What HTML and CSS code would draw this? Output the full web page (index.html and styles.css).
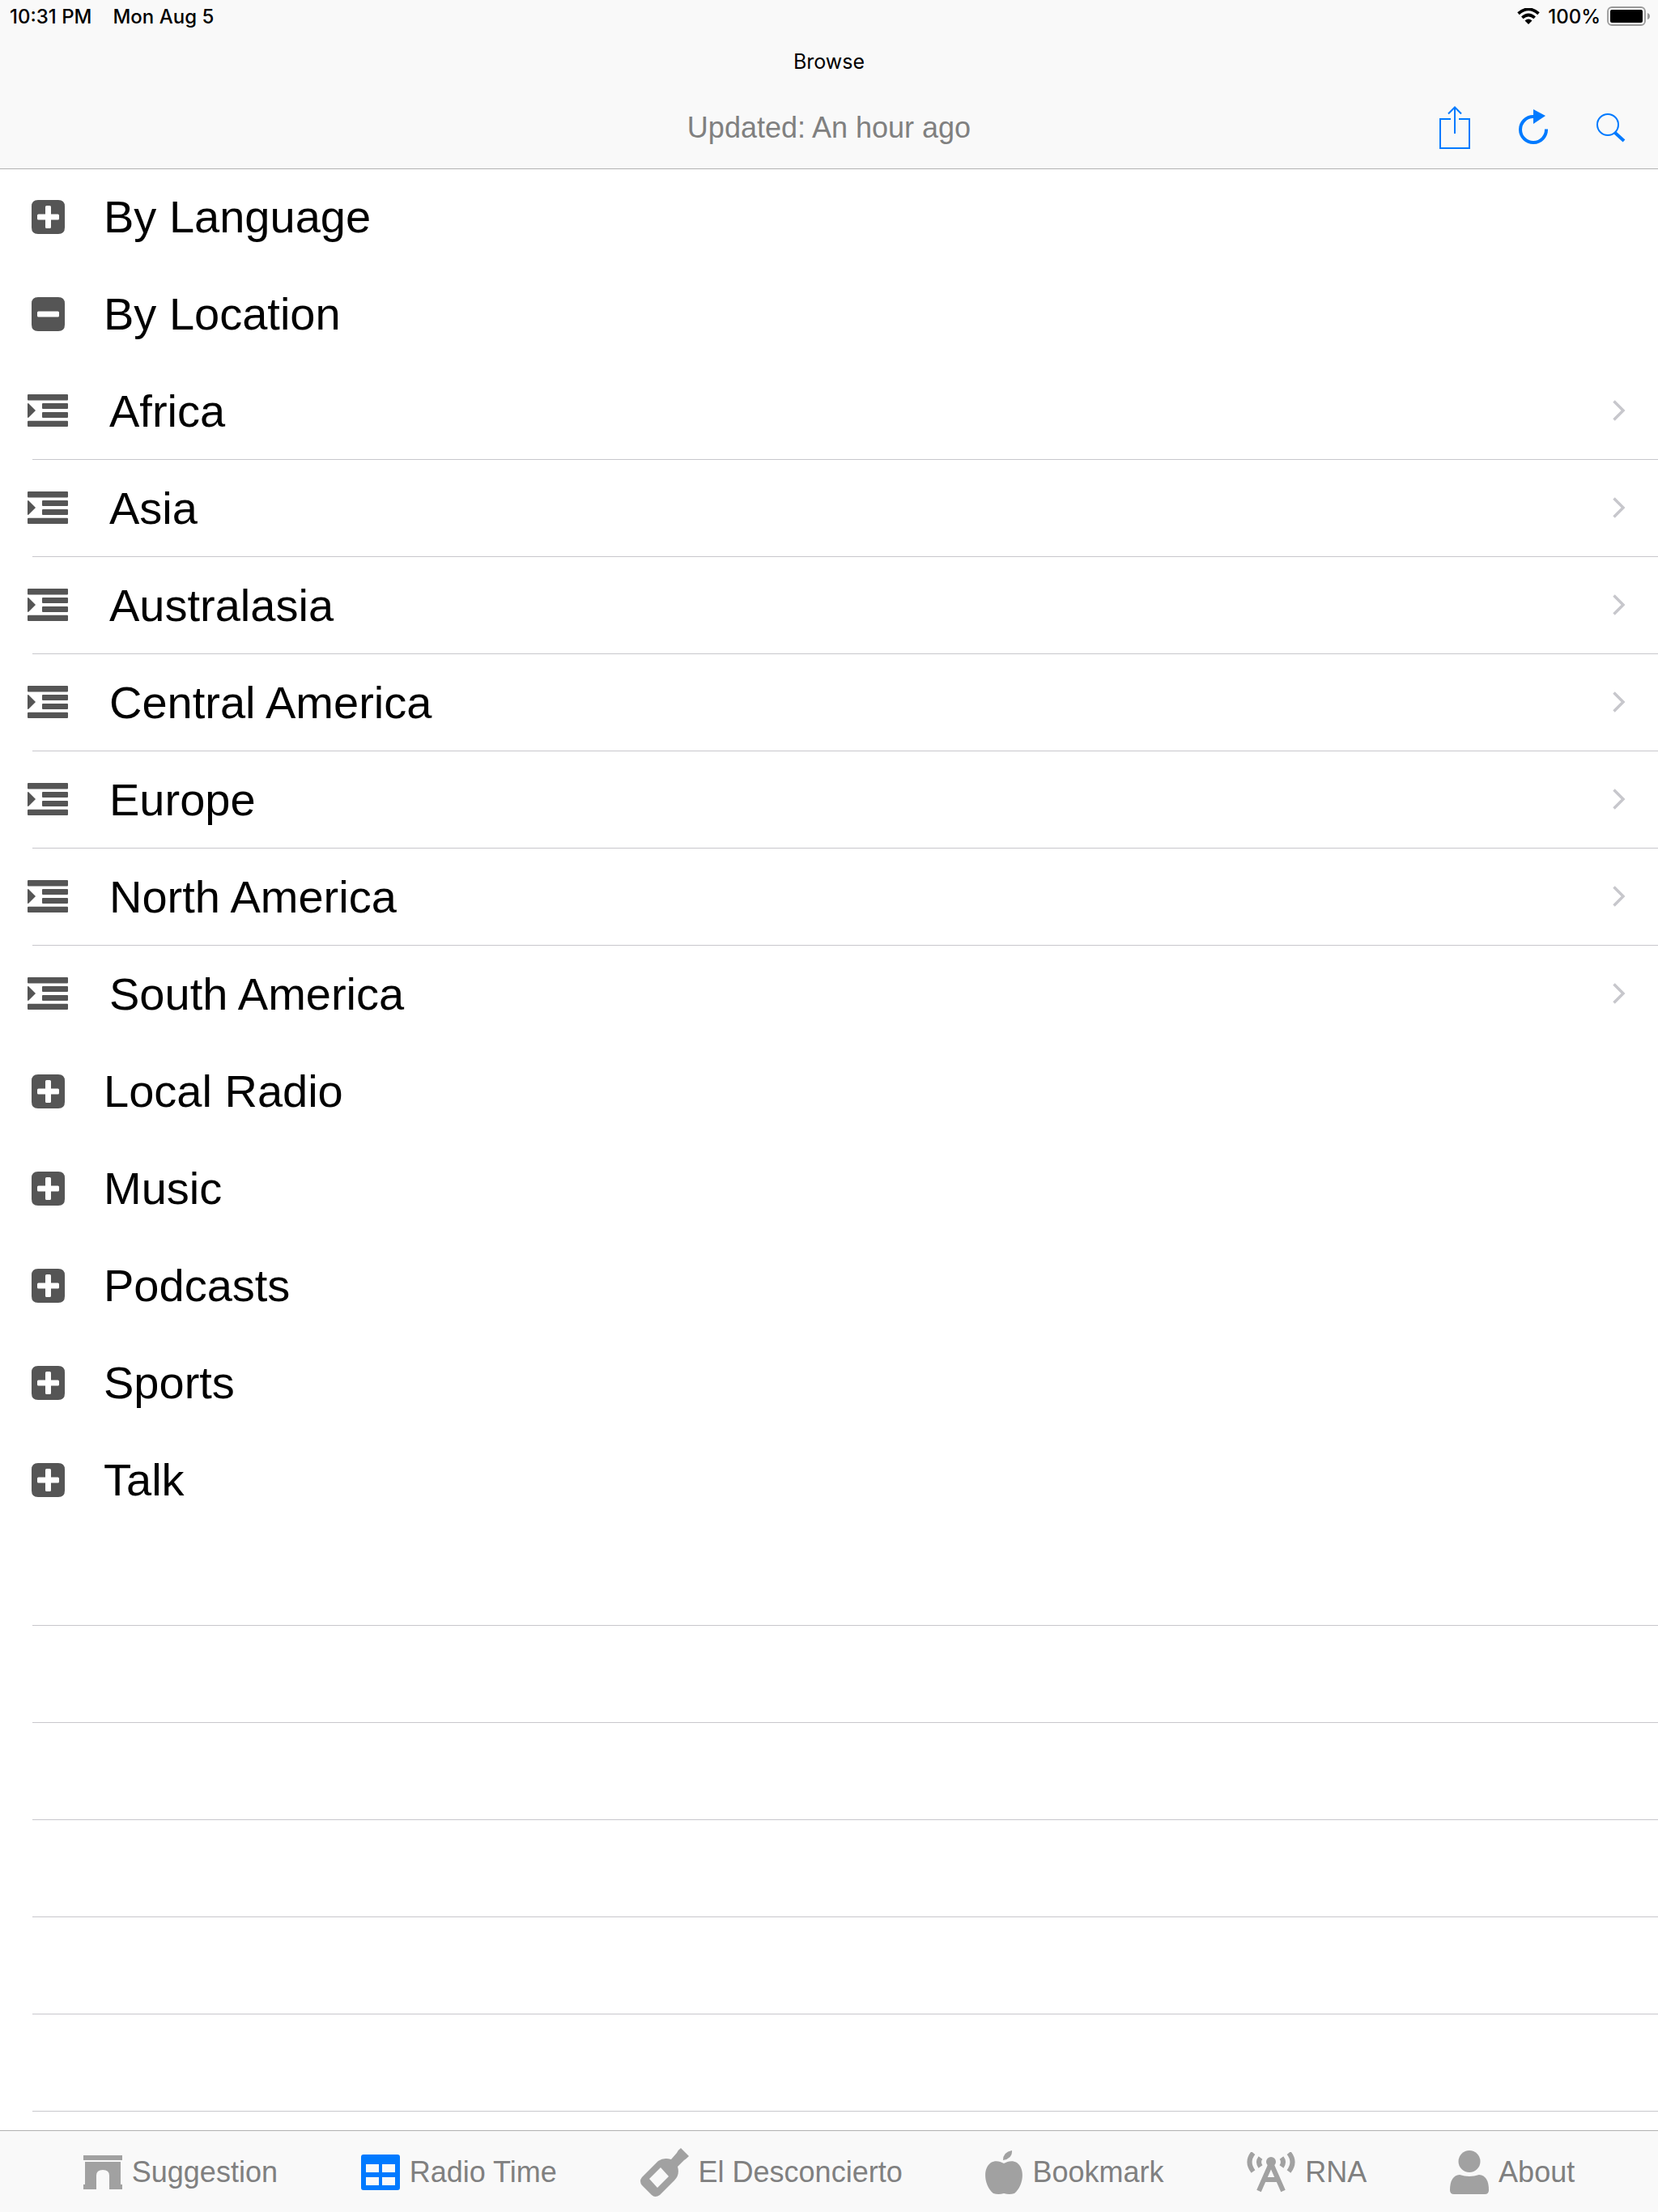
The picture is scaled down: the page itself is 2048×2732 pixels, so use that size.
FILE: index.html
```html
<!DOCTYPE html>
<html lang="en">
<head>
<meta charset="utf-8">
<meta name="viewport" content="width=device-width, initial-scale=1">
<title>Browse</title>
<link rel="stylesheet" href="styles.css">
</head>
<body>
<svg class="defs" aria-hidden="true">
  <symbol id="plus" viewBox="0 0 41 42">
    <path fill-rule="evenodd" d="M8 0H33Q41 0 41 8V34Q41 42 33 42H8Q0 42 0 34V8Q0 0 8 0ZM18.500 7Q17 7 17 8.500V17.500H8.500Q7 17.500 7 19V23Q7 24.500 8.500 24.500H17V33.500Q17 35 18.500 35H22.500Q24 35 24 33.500V24.500H32.500Q34 24.500 34 23V19Q34 17.500 32.500 17.500H24V8.500Q24 7 22.500 7Z"/>
  </symbol>
  <symbol id="minus" viewBox="0 0 41 42">
    <path fill-rule="evenodd" d="M8 0H33Q41 0 41 8V34Q41 42 33 42H8Q0 42 0 34V8Q0 0 8 0ZM8.500 17.500Q7 17.500 7 19V23Q7 24.500 8.500 24.500H32.500Q34 24.500 34 23V19Q34 17.500 32.500 17.500Z"/>
  </symbol>
  <symbol id="indent" viewBox="0 0 50 40">
    <rect width="50" height="7.500" rx="1"/><rect x="18" y="11" width="32" height="7" rx="1"/>
    <rect x="18" y="22" width="32" height="7" rx="1"/><rect y="32.700" width="50" height="7.300" rx="1"/>
    <path d="M0 12Q0 10.500 1.500 11.500L10 20 1.500 28.500Q0 29.500 0 28Z"/>
  </symbol>
  <symbol id="chevron" viewBox="0 0 16 26">
    <path d="M1.500 1.500 13 13 1.500 24.500" fill="none" stroke="currentColor" stroke-width="3.500"/>
  </symbol>
</svg>
<div class="app">
  <header class="top">
    <div class="status">
      <span>10:31 PM</span>
      <span>Mon Aug 5</span>
      <span class="status-right">
        <svg width="28" height="20" viewBox="0 0 28 20" aria-label="Wi-Fi"><path d="M14 20 9.500 15.500Q14 11.700 18.500 15.500Z"/><path d="M1.500 6.700Q14-4 26.500 6.700M6.300 11.900Q14 5.200 21.700 11.900" fill="none" stroke="#000" stroke-width="3.800"/></svg>
        <span>100%</span>
        <svg width="54" height="24" viewBox="0 0 54 24" aria-label="Battery full"><rect x="1" y="1" width="46" height="22" rx="5" fill="none" stroke="#999" stroke-width="1.800"/><rect x="4" y="4" width="40" height="16" rx="2"/><path d="M50 8Q53 9 53 12T50 16Z" fill="#999"/></svg>
      </span>
    </div>
    <h1 class="title">Browse</h1>
    <div class="toolbar">
      <p class="updated">Updated: An hour ago</p>
      <div class="tools">
        <button type="button" class="tool" aria-label="Share"><svg width="38" height="54" viewBox="0 0 38 54" fill="none" stroke="currentColor" stroke-width="2"><path d="M14 16H1V52H37V16H24M19 34V2M11 9.500 19 1.500 27 9.500"/></svg></button>
        <button type="button" class="tool" aria-label="Refresh"><svg width="36" height="46" viewBox="0 0 36 46"><path d="M34 24.500A16 16 0 1 1 18 9" fill="none" stroke="currentColor" stroke-width="4"/><path d="M18 0V18L33 8Z" fill="currentColor"/></svg></button>
        <button type="button" class="tool" aria-label="Search"><svg width="36" height="36" viewBox="0 0 36 36" fill="none" stroke="currentColor"><circle cx="14" cy="14" r="13" stroke-width="2"/><path d="M23 24 34 34" stroke-width="4"/></svg></button>
      </div>
    </div>
  </header>
  <main class="content">
    <ul class="list">
      <li><button type="button" class="row section" aria-expanded="false"><svg class="box"><use href="#plus"/></svg>By Language</button></li>
      <li><button type="button" class="row section" aria-expanded="true"><svg class="box"><use href="#minus"/></svg>By Location</button>
        <ul class="list places">
          <li><a class="row place" href="#africa"><svg class="indent"><use href="#indent"/></svg><span class="name">Africa</span><svg class="chevron"><use href="#chevron"/></svg></a></li>
          <li><a class="row place" href="#asia"><svg class="indent"><use href="#indent"/></svg><span class="name">Asia</span><svg class="chevron"><use href="#chevron"/></svg></a></li>
          <li><a class="row place" href="#australasia"><svg class="indent"><use href="#indent"/></svg><span class="name">Australasia</span><svg class="chevron"><use href="#chevron"/></svg></a></li>
          <li><a class="row place" href="#central-america"><svg class="indent"><use href="#indent"/></svg><span class="name">Central America</span><svg class="chevron"><use href="#chevron"/></svg></a></li>
          <li><a class="row place" href="#europe"><svg class="indent"><use href="#indent"/></svg><span class="name">Europe</span><svg class="chevron"><use href="#chevron"/></svg></a></li>
          <li><a class="row place" href="#north-america"><svg class="indent"><use href="#indent"/></svg><span class="name">North America</span><svg class="chevron"><use href="#chevron"/></svg></a></li>
          <li><a class="row place" href="#south-america"><svg class="indent"><use href="#indent"/></svg><span class="name">South America</span><svg class="chevron"><use href="#chevron"/></svg></a></li>
        </ul>
      </li>
      <li><button type="button" class="row section" aria-expanded="false"><svg class="box"><use href="#plus"/></svg>Local Radio</button></li>
      <li><button type="button" class="row section" aria-expanded="false"><svg class="box"><use href="#plus"/></svg>Music</button></li>
      <li><button type="button" class="row section" aria-expanded="false"><svg class="box"><use href="#plus"/></svg>Podcasts</button></li>
      <li><button type="button" class="row section" aria-expanded="false"><svg class="box"><use href="#plus"/></svg>Sports</button></li>
      <li><button type="button" class="row section" aria-expanded="false"><svg class="box"><use href="#plus"/></svg>Talk</button></li>
    </ul>
    <div class="blank-rows"></div>
  </main>
  <nav class="tabs">
    <a class="tab" href="#suggestion"><svg width="48" height="42" viewBox="0 0 48 42"><path d="M0 0H48V6H0ZM2 8H46V36H48V42H32V25Q32 18 24 18T16 25V42H0V36H2Z"/></svg>Suggestion</a>
    <a class="tab" href="#radio-time" aria-current="page"><svg class="active" width="48" height="44" viewBox="0 0 48 44"><path fill-rule="evenodd" d="M3 0H45Q48 0 48 3V41Q48 44 45 44H3Q0 44 0 41V3Q0 0 3 0ZM6 12V22H22V12ZM26 12V22H42V12ZM6 28V38H22V28ZM26 28V38H42V28Z"/></svg>Radio Time</a>
    <a class="tab" href="#el-desconcierto"><svg width="60" height="60" viewBox="0 0 60 60"><path fill-rule="evenodd" d="M50 0 60 10Q56 14 54 15L46 23Q49 33 42 40L24 58Q18 62 14 58L2 46Q-2 41 2 36L22 16Q29 11 38 14L45 6Q46 3 50 0ZM25 24 11 38 21 49 35 35Z"/></svg>El Desconcierto</a>
    <a class="tab" href="#bookmark"><svg width="46" height="54" viewBox="0 0 46 54"><path d="M33 0Q34 10 22 12Q22 2 33 0ZM23 16C28 13 34 12 39 15 50 23 47 44 36 53Q30 55 23 53 16 55 10 53C-1 44-4 23 7 15 12 12 18 13 23 16Z"/></svg>Bookmark</a>
    <a class="tab" href="#rna"><svg width="60" height="50" viewBox="0 0 60 50" fill="none" stroke="currentColor" stroke-width="6"><path d="M8 1Q-1 12 8 24M52 1Q61 12 52 24M17 7Q13 12 17 18M43 7Q47 12 43 18M15 48 30 14 45 48M22 34H38"/><circle cx="30" cy="12" r="6" fill="currentColor" stroke="none"/></svg>RNA</a>
    <a class="tab" href="#about"><svg width="48" height="54" viewBox="0 0 48 54"><circle cx="24" cy="13.500" r="13.500"/><path d="M12 30Q24 34 36 30Q48 31 48 49Q48 54 43 54H5Q0 54 0 49Q0 31 12 30Z"/></svg>About</a>
  </nav>
</div>
</body>
</html>
```
FILE: styles.css
```css
* { box-sizing: border-box; }
body { margin: 0; background: #fff; color: #000; font-family: "Liberation Sans", Arial, sans-serif; }
ul, h1, p { margin: 0; padding: 0; }
button { border: 0; background: none; font: inherit; color: inherit; }
a { color: inherit; text-decoration: none; }
svg { display: block; flex: none; }
.defs { position: absolute; width: 0; height: 0; }
.app { display: flex; flex-direction: column; min-height: 100vh; }

.top { position: relative; background: #f9f9f9; box-shadow: 0 1px 0 #b2b2b2; font-family: Inter, sans-serif; font-size: 24px; }
.status { display: flex; align-items: center; gap: 26px; height: 40px; padding: 0 9px 0 12px; font-weight: 500; }
.status-right { display: flex; align-items: center; gap: 8px; margin-left: auto; }
.status-right > span { padding-left: 2px; }
.title { height: 68px; padding-top: 20px; line-height: 32px; font-size: 25px; font-weight: 400; text-align: center; }
.toolbar { display: grid; grid-template-columns: 1fr auto 1fr; align-items: center; height: 100px; padding: 0 40px; }
.updated { grid-column: 2; font: 36px/44px "Liberation Sans", Arial, sans-serif; color: #808080; }
.tools { display: flex; align-items: center; justify-content: flex-end; gap: 60px; }
.tool { padding: 0; color: #007aff; }

.content { display: flex; flex-direction: column; flex: 1; }
.list { list-style: none; }
.row { display: flex; align-items: center; width: 100%; height: 120px; font-size: 56px; line-height: 64px; text-align: left; }
.section { padding: 0 40px 0 39px; gap: 48px; }
.place { padding: 0 40px 0 34px; gap: 51px; }
.place svg { margin-bottom: 3px; }
.name { flex: 1; }
.places li:not(:last-child) {
  background: linear-gradient(#c8c7cc, #c8c7cc) 40px 119px / 100% 1px no-repeat;
}
.blank-rows { flex: 1; margin-left: 40px; background: repeating-linear-gradient(#fff 0 119px, #c8c7cc 119px 120px); }
.box { width: 41px; height: 42px; fill: #555; }
.indent { width: 50px; height: 40px; fill: #555; }
.chevron { width: 16px; height: 26px; color: #c7c7cc; }

.tabs { display: flex; align-items: center; justify-content: space-evenly; height: 101px; padding-top: 2px; border-top: 1px solid #b2b2b2; background: #f9f9f9; }
.tab { display: flex; align-items: center; gap: 12px; font-size: 36px; line-height: 44px; color: #808080; }
.tab svg { color: #a1a1a1; fill: currentColor; }
.tab svg[fill="none"] { fill: none; }
.tab .active { color: #007aff; }
```
